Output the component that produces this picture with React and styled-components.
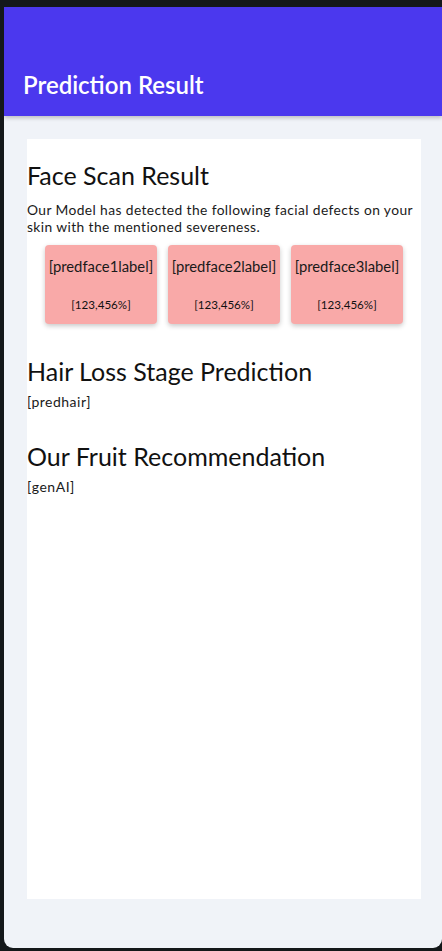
import React from 'react';
import styled, { createGlobalStyle } from 'styled-components';

const GlobalStyle = createGlobalStyle`
  html, body {
    margin: 0;
    padding: 0;
    background: #14181a;
  }
  * {
    box-sizing: border-box;
  }
`;

const faces = [
  { label: '[predface1label]', value: '[123,456%]' },
  { label: '[predface2label]', value: '[123,456%]' },
  { label: '[predface3label]', value: '[123,456%]' },
];

const App = () => {
  return (
    <>
      <GlobalStyle />
      <Frame>
        <Header>
          <HeaderTitle>Prediction Result</HeaderTitle>
        </Header>
        <Content>
          <Card>
            <SectionTitle>Face Scan Result</SectionTitle>
            <Lead>
              Our Model has detected the following facial defects on your skin
              with the mentioned severeness.
            </Lead>
            <FaceRow>
              {faces.map((f, i) => (
                <FaceCard key={i}>
                  <FaceLabel>{f.label}</FaceLabel>
                  <FaceValue>{f.value}</FaceValue>
                </FaceCard>
              ))}
            </FaceRow>

            <SectionTitle $top={31}>Hair Loss Stage Prediction</SectionTitle>
            <Value>[predhair]</Value>

            <SectionTitle $top={30}>Our Fruit Recommendation</SectionTitle>
            <Value>[genAI]</Value>
          </Card>
        </Content>
      </Frame>
    </>
  );
};

export default App;

const Frame = styled.div`
  margin: 7px 0 3px 4px;
  width: 438px;
  height: 941px;
  background: #f0f3f8;
  border-radius: 0 0 9px 9px;
  overflow: hidden;
  display: flex;
  flex-direction: column;
  font-family: Lato, 'Noto Sans', sans-serif;
`;

const Header = styled.header`
  height: 109px;
  flex-shrink: 0;
  background: #4b38ee;
  display: flex;
  align-items: flex-end;
  padding: 0 0 16px 19px;
  box-shadow: 0 2px 4px rgba(0, 0, 0, 0.22);
  position: relative;
  z-index: 1;
`;

const HeaderTitle = styled.h1`
  margin: 0;
  color: #ffffff;
  font-size: 24px;
  font-weight: 600;
  line-height: 30px;
`;

const Content = styled.main`
  flex: 1;
  padding: 23px 21px 49px 23px;
  display: flex;
`;

const Card = styled.section`
  flex: 1;
  background: #ffffff;
  padding: 20px 0 0 0;
  display: flex;
  flex-direction: column;
`;

const SectionTitle = styled.h2`
  margin: ${(p) => p.$top || 0}px 0 0 0;
  font-size: 25px;
  font-weight: 400;
  line-height: 32px;
  color: #111111;
`;

const Lead = styled.p`
  margin: 10px 0 0 0;
  font-size: 13.8px;
  letter-spacing: 0.4px;
  line-height: 17px;
  color: #1a1a1a;
`;

const FaceRow = styled.div`
  display: flex;
  justify-content: center;
  gap: 11px;
  margin-top: 10px;
`;

const FaceCard = styled.div`
  width: 112px;
  height: 79px;
  background: #f9a9a8;
  border-radius: 4px;
  box-shadow: 0 2px 5px rgba(0, 0, 0, 0.22);
  display: flex;
  flex-direction: column;
  align-items: center;
  padding-top: 12px;
`;

const FaceLabel = styled.div`
  font-size: 14.8px;
  line-height: 18px;
  white-space: nowrap;
  color: #1a1a1a;
`;

const FaceValue = styled.div`
  margin-top: 23px;
  font-size: 11.6px;
  line-height: 14px;
  color: #111111;
`;

const Value = styled.div`
  margin-top: 6px;
  font-size: 14px;
  letter-spacing: 0.5px;
  line-height: 17px;
  color: #1a1a1a;
`;
